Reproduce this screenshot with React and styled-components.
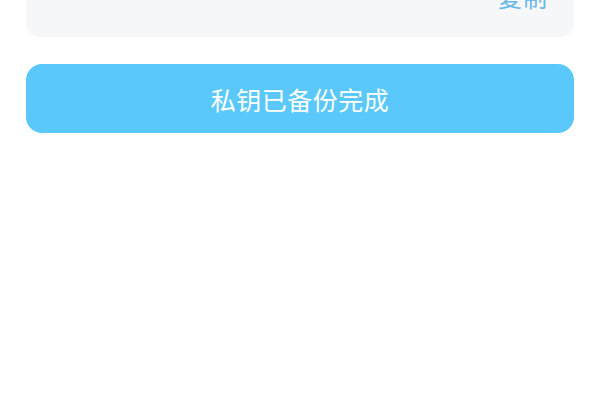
import React from 'react';
import styled, { createGlobalStyle } from 'styled-components';

const GlobalStyle = createGlobalStyle`
  html, body {
    margin: 0;
    padding: 0;
    background: #ffffff;
    overflow: hidden;
  }
  body {
    font-family: "Noto Sans CJK SC", "Noto Sans", sans-serif;
  }
`;

const Page = styled.div`
  display: flex;
  flex-direction: column;
  padding: 0 26px;
  height: 400px;
`;

const KeyCard = styled.div`
  margin-top: -40px;
  height: 77px;
  box-sizing: border-box;
  background: #f6f7f9;
  border-radius: 14px;
  display: flex;
  justify-content: flex-end;
  align-items: flex-end;
  padding: 0 26px 28px;
`;

const CopyLink = styled.span`
  font-size: 24px;
  line-height: 24px;
  color: #68b9e8;
  letter-spacing: 1px;
`;

const DoneButton = styled.button`
  margin-top: 27px;
  height: 69px;
  width: 100%;
  border: none;
  border-radius: 16px;
  background: #5ac8fa;
  color: #ffffff;
  font-family: "Noto Sans CJK SC", "Noto Sans", sans-serif;
  font-size: 25px;
  letter-spacing: 0.5px;
  cursor: pointer;
`;

export default function App() {
  return (
    <>
      <GlobalStyle />
      <Page>
        <KeyCard>
          <CopyLink>复制</CopyLink>
        </KeyCard>
        <DoneButton>私钥已备份完成</DoneButton>
      </Page>
    </>
  );
}
